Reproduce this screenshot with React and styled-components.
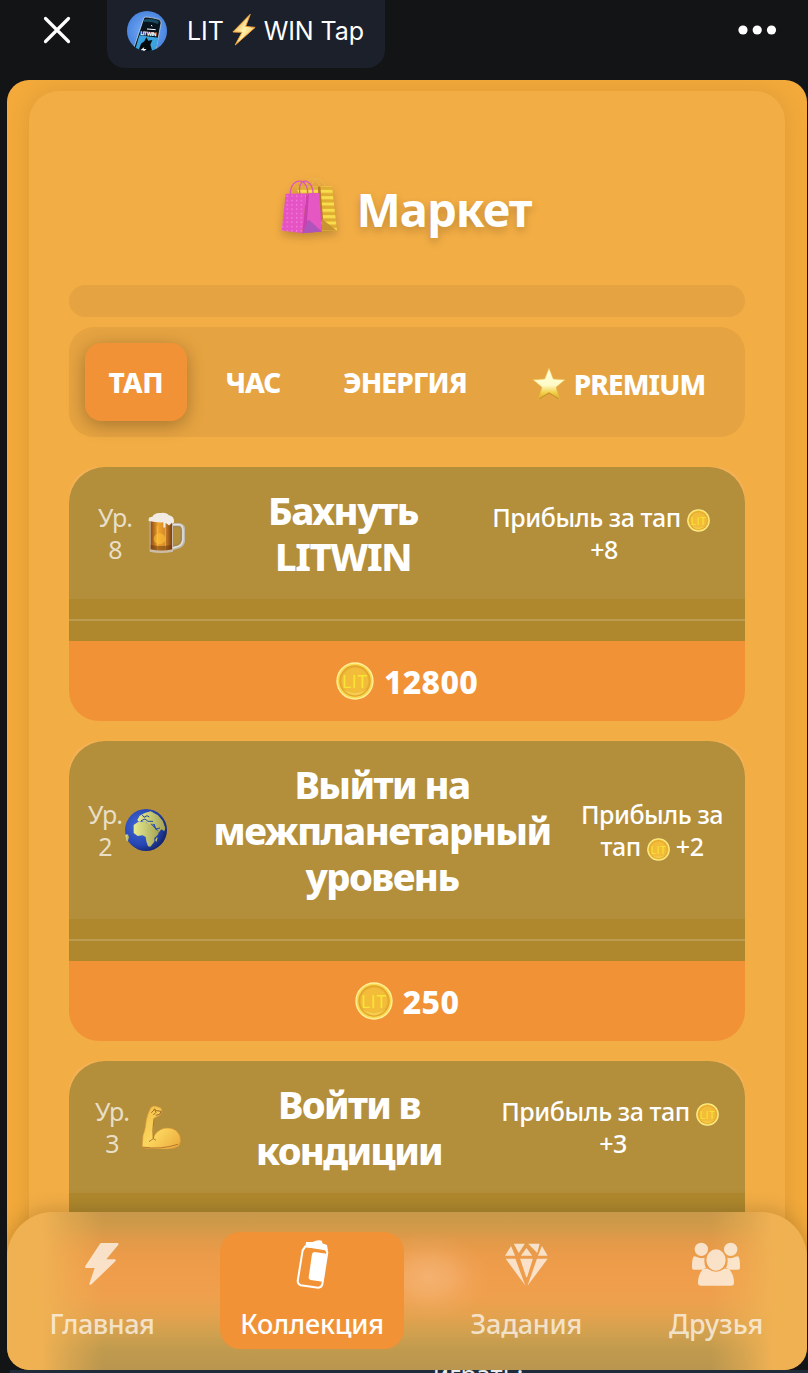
import React from "react";
import styled, { createGlobalStyle } from "styled-components";

const GlobalStyle = createGlobalStyle`
  *, *::before, *::after { box-sizing: border-box; }
  body {
    margin: 0;
    background: #131416;
    color: #fff;
    font-family: "Noto Sans", "Open Sans", sans-serif;
  }
  svg { display: block; flex: none; }
`;

const Page = styled.div`
  display: flex;
  flex-direction: column;
  width: 808px;
  height: 1373px;
  overflow: hidden;
`;

const TopBar = styled.header`
  display: flex;
  align-items: flex-start;
  height: 80px;
  flex: none;
  padding: 0 31px 0 43px;
`;

const IconSlot = styled.div`
  display: flex;
  align-items: center;
  height: 60px;
`;

const AppChip = styled.div`
  display: flex;
  align-items: center;
  width: 278px;
  height: 68px;
  margin: 0 auto 0 36px;
  padding: 0 0 7px 20px;
  border-radius: 0 0 18px 18px;
  background: #1b202b;
`;

const AppName = styled.span`
  display: flex;
  align-items: center;
  margin-left: 20px;
  font: 400 25px/30px Inter, sans-serif;
  letter-spacing: -0.1px;
  white-space: pre;
  svg { margin: -2px 8px 0; }
`;

const Window = styled.main`
  position: relative;
  height: 1290px;
  flex: none;
  margin: 0 1px 0 7px;
  padding: 11px 22px 0;
  border-radius: 22px;
  background: #f3aa3b;
  overflow: hidden;
`;

const Panel = styled.section`
  display: flex;
  flex-direction: column;
  height: 1400px;
  padding: 0 40px;
  border-radius: 30px;
  background: #f2ad45;
  box-shadow: 0 0 24px rgba(0, 0, 0, 0.1);
`;

const Heading = styled.h1`
  display: flex;
  align-items: center;
  justify-content: center;
  gap: 20px;
  height: 194px;
  flex: none;
  margin: 0;
  padding: 42px 0 0;
  font-size: 47px;
  font-weight: 700;
  letter-spacing: ${(p) => p.$track}px;
  text-shadow: 0 4px 8px rgba(0, 0, 0, 0.2);
  svg { margin: -8px 0 0 -2px; filter: drop-shadow(0 4px 4px rgba(0, 0, 0, 0.2)); }
`;

const SlimBar = styled.div`
  height: 32px;
  flex: none;
  border-radius: 16px;
  background: #e6a341;
`;

const Tabs = styled.nav`
  display: flex;
  align-items: flex-start;
  gap: 15px;
  height: 110px;
  flex: none;
  margin: 10px 0 30px;
  padding: 16px;
  border-radius: 25px;
  background: #e6a341;
`;

const Tab = styled.button`
  display: flex;
  align-items: center;
  justify-content: center;
  gap: 8px;
  width: ${(p) => p.$width}px;
  height: 78px;
  flex: none;
  padding: ${(p) => p.$drop || 0}px 0 0;
  border: 0;
  border-radius: 16px;
  background: ${(p) => (p.$active ? "#f19236" : "transparent")};
  box-shadow: ${(p) => (p.$active ? "0 4px 18px rgba(0, 0, 0, 0.28)" : "none")};
  color: #fff;
  font: 800 28px/36px "Noto Sans", sans-serif;
  letter-spacing: ${(p) => p.$track}px;
  white-space: nowrap;
`;

const Card = styled.article`
  flex: none;
  margin-bottom: 20px;
  border-radius: 30px;
  background: #f4b155;
  overflow: hidden;
`;

const CardHead = styled.div`
  display: grid;
  grid-template-columns: ${(p) => p.$columns};
  align-items: center;
  height: ${(p) => p.$height}px;
  padding-left: ${(p) => p.$inset}px;
  border-radius: 36px 36px 0 0;
  background: #b38e3b;
`;

const Level = styled.div`
  width: 38px;
  color: rgba(255, 255, 255, 0.72);
  font-size: 25px;
  line-height: 32px;
  letter-spacing: -1px;
  text-align: center;
  white-space: pre-line;
`;

const CardIcon = styled.div`
  display: flex;
  justify-content: center;
  width: 44px;
`;

const CardTitle = styled.h2`
  margin: 0;
  padding-bottom: 1px;
  font-size: 38px;
  font-weight: 800;
  line-height: 46px;
  letter-spacing: ${(p) => p.$track}px;
  text-align: center;
  white-space: pre;
`;

const Profit = styled.div`
  display: flex;
  flex-direction: column;
  align-items: center;
  font-size: 25px;
  font-weight: 500;
  line-height: 32px;
  letter-spacing: -0.45px;
  white-space: nowrap;
`;

const ProfitLine = styled.div`
  display: flex;
  align-items: center;
  gap: 6px;
  height: 32px;
  padding-right: ${(p) => (p.$coinLast ? 6 : 0)}px;
  svg { margin-top: 6px; }
`;

const Divider = styled.div`
  display: flex;
  align-items: center;
  height: 42px;
  background: #af882d;
  &::before { content: ""; width: 100%; height: 2px; background: #bb9b50; }
`;

const BuyButton = styled.button`
  display: flex;
  align-items: center;
  justify-content: center;
  gap: 10px;
  width: 100%;
  height: 80px;
  border: 0;
  padding: 0;
  background: #f19236;
  color: #fff;
  font: 800 32px/40px "Noto Sans", sans-serif;
  letter-spacing: 0.3px;
  span { padding-top: 2px; }
`;

const BottomNav = styled.nav`
  position: absolute;
  left: 0;
  right: 0;
  bottom: 0;
  display: flex;
  justify-content: space-around;
  height: 158px;
  padding-top: 20px;
  border-radius: 46px 46px 22px 22px;
  background:
    radial-gradient(ellipse 60px 44px at 422px 65px, rgba(247, 190, 136, 0.6), rgba(247, 190, 136, 0.42) 35%, rgba(247, 190, 136, 0.13) 70%, rgba(247, 190, 136, 0)),
    linear-gradient(90deg, #f0b153 0, #f0b153 34px, rgba(240, 177, 83, 0.5) 62px, rgba(240, 177, 83, 0) 96px,
      rgba(240, 177, 83, 0) 704px, rgba(240, 177, 83, 0.5) 738px, #f0b153 766px),
    linear-gradient(180deg, #c8984a 0, #cf9a49 13px, #e19a49 28px, #eb9b49 42px, #f09d4b 62px,
      #efa04d 85px, #e5a24e 103px, #d2a14f 120px, #c09a4e 138px, #b9964f 158px);
  box-shadow: 0 0 22px rgba(0, 0, 0, 0.2);
`;

const NavItem = styled.a`
  display: flex;
  flex-direction: column;
  align-items: center;
  width: ${(p) => p.$width}px;
  height: 117px;
  border-radius: 20px;
  background: ${(p) => (p.$active ? "#f19236" : "transparent")};
  color: ${(p) => (p.$active ? "#fff" : "rgba(255, 255, 255, 0.7)")};
  font-size: 27px;
  font-weight: 500;
  line-height: 36px;
  letter-spacing: ${(p) => p.$track}px;
`;

const NavIcon = styled.div`
  display: flex;
  align-items: center;
  justify-content: center;
  height: 64px;
  margin-bottom: 10px;
`;

const Backdrop = styled.footer`
  height: 3px;
  flex: none;
  margin-left: 10px;
  padding-left: 423px;
  background: #1f2b39;
  color: #e8ebee;
  font-size: 26px;
  line-height: 8px;
  overflow: hidden;
`;

const CloseIcon = () => (
  <svg width="28" height="28" viewBox="0 0 28 28" stroke="#fff" strokeWidth="3.2" strokeLinecap="round">
    <path d="M2.5 2.5 25.5 25.5M25.5 2.5 2.5 25.5" />
  </svg>
);

const MoreIcon = () => (
  <svg width="39" height="10" viewBox="0 0 39 10" fill="#fff">
    <circle cx="5" cy="5" r="4.6" /><circle cx="19.2" cy="5" r="4.6" /><circle cx="33.5" cy="5" r="4.6" />
  </svg>
);

const Avatar = () => (
  <svg width="40" height="40" viewBox="0 0 120 120">
    <defs>
      <clipPath id="avatarClip"><circle cx="60" cy="60" r="60" /></clipPath>
      <radialGradient id="avatarBg"><stop offset="0" stopColor="#79b0fa" /><stop offset="1" stopColor="#4b86e0" /></radialGradient>
    </defs>
    <g clipPath="url(#avatarClip)">
      <rect width="120" height="120" fill="url(#avatarBg)" />
      <path d="M51 20q5-5 44 5 9 3 7 12L84 130H14Z" fill="#07131d" stroke="#e1eaf0" strokeWidth="2" />
      <path d="M52 25q25-5 44 6l-3 8q-24-9-43-6Z" fill="#1a4a5f" />
      <path d="M37 73 94 80 84 125H22Z" fill="#39a3df" />
      <path d="m34 120 8-22 10-7 6-12 6 10 12-2-6 14 6 20Z" fill="#04090d" />
      <text x="40" y="72" fill="#fff" fontFamily="Inter, sans-serif" fontSize="16" fontWeight="800" transform="rotate(5 40 72)" textLength="48">LIT WIN</text>
      <path d="M60 54l26 2m-13-14 2 4" stroke="#fff" strokeWidth="3" />
      <path d="m52 108-12 10h9l-4 8 14-12h-9Z" fill="#fff" />
    </g>
  </svg>
);

const GoldBolt = () => (
  <svg width="24" height="32" viewBox="0 0 72 98">
    <defs><linearGradient id="goldBolt" x1="0" y1="0" x2="1" y2="1"><stop offset="0" stopColor="#ef8f22" /><stop offset=".5" stopColor="#fff3ae" /><stop offset="1" stopColor="#f3a42b" /></linearGradient></defs>
    <path d="M55 1 2 55l28 1L9 95l61-54-29-3Z" fill="url(#goldBolt)" stroke="#f2a33a" strokeWidth="3" strokeLinejoin="round" />
  </svg>
);

const ShoppingBags = () => (
  <svg width="56" height="57" viewBox="0 0 168 170">
    <defs>
      <pattern id="bagDots" width="14" height="13" patternUnits="userSpaceOnUse"><circle cx="5" cy="5" r="1.8" fill="#ffb0ef" /></pattern>
      <pattern id="bagStripes" width="40" height="19" patternUnits="userSpaceOnUse"><rect width="40" height="10" fill="#f8dc4b" /><rect y="10" width="40" height="9" fill="#dfad31" /></pattern>
    </defs>
    <path d="M75 34C78 8 90 1 99 4s14 14 18 22M94 20c4-17 15-20 24-12l18 20" fill="none" stroke="#e9b64c" strokeWidth="3" />
    <path d="M43 29 153 27 168 160 110 161Z" fill="url(#bagStripes)" />
    <path d="m118 28 8 96-12 30-3-126Z" fill="#b8772c" />
    <path d="m124 126 43 34h-51Z" fill="#c99233" />
    <path d="M14 50 76 49 64 168 2 160Z" fill="#e653c4" />
    <path d="M14 50 76 49 64 168 2 160Z" fill="url(#bagDots)" />
    <path d="M76 49 115 48 122 163 64 168Z" fill="#cc3fae" />
    <path d="m84 49 31-1 7 115-44-32Z" fill="#e557c2" />
    <path d="m83 127 39 36-58 5Z" fill="#ae55bb" />
    <path d="M29 60C25 31 37 14 54 12c18-3 29 21 25 43M58 57c-7-31 2-47 15-45 16 3 25 20 23 44" fill="none" stroke="#da55bd" strokeWidth="4" />
  </svg>
);

const Star = () => (
  <svg width="34" height="34" viewBox="0 0 102 102">
    <defs><linearGradient id="starFill" x1="0" y1="0" x2="0" y2="1"><stop offset="0" stopColor="#fffde0" /><stop offset=".55" stopColor="#fffbc7" /><stop offset=".8" stopColor="#f2cd42" /><stop offset="1" stopColor="#dca72f" /></linearGradient></defs>
    <path d="m51 3 13 33 35 2-27 23 10 36-31-19-31 19 10-36L3 38l35-2Z" fill="url(#starFill)" stroke="#eac04b" strokeWidth="2" strokeLinejoin="round" />
    <path d="m21 96 30-18 30 18" fill="none" stroke="#c79631" strokeWidth="4" />
  </svg>
);

const CoinLabel = styled.text`
  font: 400 50px Inter, sans-serif;
  letter-spacing: 0;
  fill: #f8e436;
`;

const Coin = ({ size }) => (
  <svg width={size} height={size} viewBox="0 0 114 114">
    <defs><radialGradient id="coinFace"><stop offset="0" stopColor="#f5bd35" /><stop offset=".8" stopColor="#f2bc3c" /><stop offset="1" stopColor="#df9d28" /></radialGradient></defs>
    <circle cx="57" cy="57" r="56" fill="#fff09a" />
    <circle cx="57" cy="57" r="52" fill="#f9d94d" />
    <circle cx="57" cy="57" r="47" fill="url(#coinFace)" />
    <path d="M20 82q37 37 74 0-37 23-74 0" fill="#f9df62" opacity=".6" />
    <CoinLabel x="57" y="79" textAnchor="middle" textLength="76">LIT</CoinLabel>
  </svg>
);

const Beer = () => (
  <svg width="37" height="42" viewBox="0 0 111 126">
    <defs><linearGradient id="beerFill"><stop offset="0" stopColor="#8c4a12" /><stop offset=".35" stopColor="#f0a52d" /><stop offset=".65" stopColor="#d58a29" /><stop offset="1" stopColor="#7a3f12" /></linearGradient></defs>
    <path d="M73 38h20q15 0 14 22v22q-1 18-16 23l-17 5" fill="none" stroke="#bdb9b0" strokeWidth="10" />
    <path d="M74 38h19q13 0 12 22v22q-1 16-14 21l-17 5" fill="none" stroke="#e6e3dd" strokeWidth="4" />
    <path d="M76 44h15q9 0 8 17v20q-1 15-13 18l-10 2" fill="none" stroke="#8b7f70" strokeWidth="2" />
    <path d="M5 20h70v99q-35 8-70 0Z" fill="#cdbda8" />
    <path d="M8 24h64v88q-32 7-64 0Z" fill="url(#beerFill)" />
    <path d="M28 42v73M52 42v73" stroke="#ffd270" strokeWidth="3" opacity=".55" />
    <ellipse cx="35" cy="80" rx="18" ry="16" fill="#ffc43b" opacity=".55" />
    <path d="M8 98q32 8 64 0v14q-32 7-64 0Z" fill="#6e3a10" opacity=".55" />
    <path d="M2 27q-2-13 11-13Q20 1 38 3q18-4 25 7 17 3 15 22l-8 2-4 4q-4 4-7-1l-6-4-1 12q-4 5-6 0V31q-20 1-44-4Z" fill="#f1ebe3" />
  </svg>
);

const Globe = () => (
  <svg width="44" height="44" viewBox="0 0 132 132">
    <defs>
      <radialGradient id="sea" cx=".35" cy=".4" r=".7"><stop offset="0" stopColor="#446ad8" /><stop offset=".65" stopColor="#2646b3" /><stop offset="1" stopColor="#111f62" /></radialGradient>
      <linearGradient id="land"><stop offset="0" stopColor="#e8ec91" /><stop offset="1" stopColor="#a3a254" /></linearGradient>
    </defs>
    <circle cx="66" cy="66" r="63" fill="url(#sea)" />
    <g fill="url(#land)">
      <path d="m29 51 13-9 23-1 6 6 16 2 8 16 11 5-5 11-10 9 0 11-12 15-7-1-5-15-2-13-9-5-15 2-12-9Z" />
      <path d="m40 36 7-13 15-8 18-5 22 12 14 16 8 22-3 10-9-6-6 7-10-11-4-12-12-1-8 2-6-8-7 0-6-3-8 4Z" />
      <path d="m4 80 8-1 3 9-3 10-4 2Z" />
      <path d="m94 96 5-9 2 3-4 12Z" />
    </g>
    <path d="m51 38 12-5 9 7 15 0m-5 8 14 15 12-3M55 21l5 7 9-5 7 4" fill="none" stroke="#244799" strokeWidth="3" />
  </svg>
);

const Biceps = () => (
  <svg width="42" height="44" viewBox="0 0 126 132">
    <defs><linearGradient id="skin" x1="0" y1="0" x2="1" y2="1"><stop offset="0" stopColor="#efbd45" /><stop offset=".5" stopColor="#fbd65e" /><stop offset="1" stopColor="#eba83a" /></linearGradient></defs>
    <path d="M24 26 32 8q9-8 16-4l9 3q9 1 8 11l-4 12-18 9-2 18-2 43q10-24 33-30 28-4 42 13 9 10 7 28l-4 11q-8 7-33 10-32 1-78-4l3-37q5-12 7-25 1-20 8-40Z" fill="url(#skin)" stroke="#dc9837" strokeWidth="2" />
    <path d="M34 23q7-5 10-12m3 20 12-3 4-9-13-2-6-4 4 9-8 8" fill="none" stroke="#a3652c" strokeWidth="3" />
    <path d="M42 40q-6 36-2 61l-13 9m13-9 8 5M6 126q56 9 108-8" fill="none" stroke="#a8692d" strokeWidth="2.5" />
  </svg>
);

const BoltIcon = () => (
  <svg width="34" height="42" viewBox="254 161 102 126" fill="currentColor">
    <path d="M299 163q2-2 5-2h48q4 1 2 5l-36 44h26q4 2 1 6l-73 70q-5 2-5-3l16-47h-26q-4-2-2-6Z" />
  </svg>
);

const CanIcon = () => (
  <svg width="33" height="49" viewBox="885 154 99 147" fill="none" stroke="currentColor">
    <path d="m913 173-8 12-15 92q0 8 9 13l53 7q10-1 12-10l15-96-7-12Z" strokeWidth="6" strokeLinejoin="round" />
    <path d="m915 160 20 0q13-7 28-4l1 8 14 5 3 17-68-11Z" fill="currentColor" stroke="none" />
    <path d="m941 190 36 5-12 84-36-5q-7-2-6-8l10-70q2-6 8-6Z" fill="currentColor" stroke="none" />
  </svg>
);

const GemIcon = () => (
  <svg width="43" height="43" viewBox="302 163 128 128" fill="currentColor">
    <path d="m320 172 12 29h-30Zm92 0 17 29h-29ZM328 165h33l-18 28Zm43 0h34l-7 28ZM366 178l17 23h-34ZM304 210h29l29 79ZM347 210h38l-17 54h-3ZM397 210h32l-60 80Z" />
  </svg>
);

const FriendsIcon = () => (
  <svg width="48" height="44" viewBox="864 154 144 132" fill="currentColor">
    <circle cx="892" cy="176" r="20" /><circle cx="980" cy="176" r="20" />
    <path d="M868 198q5-2 9 0 13 7 25 3-3 17 4 31-5 1-8 5h-28q-7 0-6-9 0-21 4-30ZM1004 198q-5-2-9 0-13 7-25 3 3 17-4 31 5 1 8 5h28q7 0 6-9 0-21-4-30Z" />
    <ellipse cx="936" cy="208" rx="29" ry="32" />
    <path d="M882 277q0-26 13-39 10-8 19-2 22 15 44 0 9-6 19 2 13 13 13 39 0 8-9 8h-90q-9 0-9-8Z" />
  </svg>
);

const TABS = [
  { label: "ТАП", width: 102, track: -0.2, active: true },
  { label: "ЧАС", width: 102, track: -1 },
  { label: "ЭНЕРГИЯ", width: 172, track: -0.9 },
  { label: "PREMIUM", width: 225, track: -0.9, drop: 4, icon: <Star /> },
];

const CARDS = [
  {
    level: 8, icon: <Beer />, title: "Бахнуть\nLITWIN", track: -1.4, price: "12800",
    columns: "48px 47px 304px 218px", height: 132, inset: 27,
    profit: [{ before: "Прибыль за тап", coin: true }, { after: "+8" }],
  },
  {
    level: 2, icon: <Globe />, title: "Выйти на\nмежпланетарный\nуровень", track: -1.5, price: "250",
    columns: "38px 60px 396px 144px", height: 178, inset: 17,
    profit: [{ before: "Прибыль за" }, { before: "тап", coin: true, after: "+2" }],
  },
  {
    level: 3, icon: <Biceps />, title: "Войти в\nкондиции", track: -1.6,
    columns: "46px 55px 310px 218px", height: 132, inset: 24,
    profit: [{ before: "Прибыль за тап", coin: true }, { after: "+3" }],
  },
];

const NAV = [
  { label: "Главная", width: 143, track: -0.5, icon: <BoltIcon /> },
  { label: "Коллекция", width: 184, track: -0.2, icon: <CanIcon />, active: true },
  { label: "Задания", width: 151, track: -0.2, icon: <GemIcon /> },
  { label: "Друзья", width: 135, track: 0.1, icon: <FriendsIcon /> },
];

export default function App() {
  return (
    <Page>
      <GlobalStyle />
      <TopBar>
        <IconSlot><CloseIcon /></IconSlot>
        <AppChip>
          <Avatar />
          <AppName>LIT<GoldBolt />WIN Tap</AppName>
        </AppChip>
        <IconSlot><MoreIcon /></IconSlot>
      </TopBar>
      <Window>
        <Panel>
          <Heading $track={-1}><ShoppingBags />Маркет</Heading>
          <SlimBar />
          <Tabs>
            {TABS.map((t) => (
              <Tab key={t.label} $width={t.width} $track={t.track} $active={t.active} $drop={t.drop}>
                {t.icon}{t.label}
              </Tab>
            ))}
          </Tabs>
          {CARDS.map((c) => (
            <Card key={c.level}>
              <CardHead $columns={c.columns} $height={c.height} $inset={c.inset}>
                <Level>{`Ур.\n${c.level}`}</Level>
                <CardIcon>{c.icon}</CardIcon>
                <CardTitle $track={c.track}>{c.title}</CardTitle>
                <Profit>
                  {c.profit.map((line, i) => (
                    <ProfitLine key={i} $coinLast={line.coin && !line.after}>
                      {line.before}{line.coin && <Coin size={23} />}{line.after}
                    </ProfitLine>
                  ))}
                </Profit>
              </CardHead>
              <Divider />
              <BuyButton>
                {c.price && <><Coin size={38} /><span>{c.price}</span></>}
              </BuyButton>
            </Card>
          ))}
        </Panel>
        <BottomNav>
          {NAV.map((n) => (
            <NavItem key={n.label} $width={n.width} $track={n.track} $active={n.active}>
              <NavIcon>{n.icon}</NavIcon>
              {n.label}
            </NavItem>
          ))}
        </BottomNav>
      </Window>
      <Backdrop>играть:</Backdrop>
    </Page>
  );
}
